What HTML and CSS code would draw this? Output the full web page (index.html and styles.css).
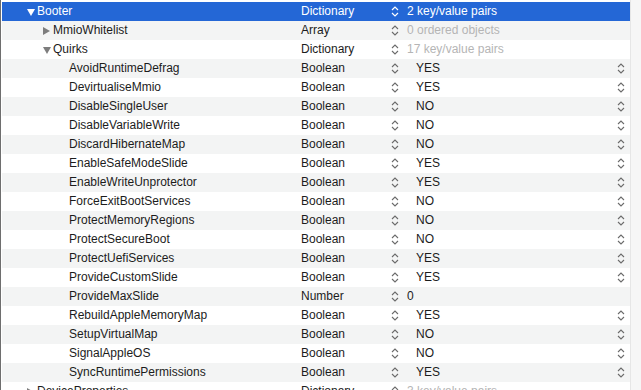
FILE: index.html
```html
<!DOCTYPE html>
<html>
<head>
<meta charset="utf-8">
<link rel="stylesheet" href="styles.css">
</head>
<body>
<div class="frame">
  <div class="outline">
    <div class="row sel">
      <div class="key lvl0"><span class="disc"><svg width="8" height="8" viewBox="0 0 8 8"><path d="M0 1 H8 L4 8 Z" fill="#fff"/></svg></span>Booter</div>
      <div class="type">Dictionary</div>
      <div class="step"><svg width="8" height="11" viewBox="0 0 8 11"><path d="M1 4 L4 1 L7 4 M1 7 L4 10 L7 7" fill="none" stroke="#fff" stroke-width="1.2"/></svg></div>
      <div class="val">2 key/value pairs</div>
    </div>
    <div class="row alt">
      <div class="key lvl1"><span class="disc"><svg width="8" height="8" viewBox="0 0 8 8"><path d="M0 0 L7 4 L0 8 Z" fill="#7d7d7d"/></svg></span>MmioWhitelist</div>
      <div class="type">Array</div>
      <div class="step"><svg width="8" height="11" viewBox="0 0 8 11"><path d="M1 4 L4 1 L7 4 M1 7 L4 10 L7 7" fill="none" stroke="#6b6b6b" stroke-width="1.1"/></svg></div>
      <div class="val dim">0 ordered objects</div>
    </div>
    <div class="row">
      <div class="key lvl1"><span class="disc"><svg width="8" height="8" viewBox="0 0 8 8"><path d="M0 1 H8 L4 8 Z" fill="#7d7d7d"/></svg></span>Quirks</div>
      <div class="type">Dictionary</div>
      <div class="step"><svg width="8" height="11" viewBox="0 0 8 11"><path d="M1 4 L4 1 L7 4 M1 7 L4 10 L7 7" fill="none" stroke="#6b6b6b" stroke-width="1.1"/></svg></div>
      <div class="val dim">17 key/value pairs</div>
    </div>
    <div class="row alt"><div class="key lvl2">AvoidRuntimeDefrag</div><div class="type">Boolean</div><div class="step"><svg width="8" height="11" viewBox="0 0 8 11"><path d="M1 4 L4 1 L7 4 M1 7 L4 10 L7 7" fill="none" stroke="#6b6b6b" stroke-width="1.1"/></svg></div><div class="val bool"><span>YES</span><svg width="8" height="11" viewBox="0 0 8 11"><path d="M1 4 L4 1 L7 4 M1 7 L4 10 L7 7" fill="none" stroke="#6b6b6b" stroke-width="1.1"/></svg></div></div>
    <div class="row"><div class="key lvl2">DevirtualiseMmio</div><div class="type">Boolean</div><div class="step"><svg width="8" height="11" viewBox="0 0 8 11"><path d="M1 4 L4 1 L7 4 M1 7 L4 10 L7 7" fill="none" stroke="#6b6b6b" stroke-width="1.1"/></svg></div><div class="val bool"><span>YES</span><svg width="8" height="11" viewBox="0 0 8 11"><path d="M1 4 L4 1 L7 4 M1 7 L4 10 L7 7" fill="none" stroke="#6b6b6b" stroke-width="1.1"/></svg></div></div>
    <div class="row alt"><div class="key lvl2">DisableSingleUser</div><div class="type">Boolean</div><div class="step"><svg width="8" height="11" viewBox="0 0 8 11"><path d="M1 4 L4 1 L7 4 M1 7 L4 10 L7 7" fill="none" stroke="#6b6b6b" stroke-width="1.1"/></svg></div><div class="val bool"><span>NO</span><svg width="8" height="11" viewBox="0 0 8 11"><path d="M1 4 L4 1 L7 4 M1 7 L4 10 L7 7" fill="none" stroke="#6b6b6b" stroke-width="1.1"/></svg></div></div>
    <div class="row"><div class="key lvl2">DisableVariableWrite</div><div class="type">Boolean</div><div class="step"><svg width="8" height="11" viewBox="0 0 8 11"><path d="M1 4 L4 1 L7 4 M1 7 L4 10 L7 7" fill="none" stroke="#6b6b6b" stroke-width="1.1"/></svg></div><div class="val bool"><span>NO</span><svg width="8" height="11" viewBox="0 0 8 11"><path d="M1 4 L4 1 L7 4 M1 7 L4 10 L7 7" fill="none" stroke="#6b6b6b" stroke-width="1.1"/></svg></div></div>
    <div class="row alt"><div class="key lvl2">DiscardHibernateMap</div><div class="type">Boolean</div><div class="step"><svg width="8" height="11" viewBox="0 0 8 11"><path d="M1 4 L4 1 L7 4 M1 7 L4 10 L7 7" fill="none" stroke="#6b6b6b" stroke-width="1.1"/></svg></div><div class="val bool"><span>NO</span><svg width="8" height="11" viewBox="0 0 8 11"><path d="M1 4 L4 1 L7 4 M1 7 L4 10 L7 7" fill="none" stroke="#6b6b6b" stroke-width="1.1"/></svg></div></div>
    <div class="row"><div class="key lvl2">EnableSafeModeSlide</div><div class="type">Boolean</div><div class="step"><svg width="8" height="11" viewBox="0 0 8 11"><path d="M1 4 L4 1 L7 4 M1 7 L4 10 L7 7" fill="none" stroke="#6b6b6b" stroke-width="1.1"/></svg></div><div class="val bool"><span>YES</span><svg width="8" height="11" viewBox="0 0 8 11"><path d="M1 4 L4 1 L7 4 M1 7 L4 10 L7 7" fill="none" stroke="#6b6b6b" stroke-width="1.1"/></svg></div></div>
    <div class="row alt"><div class="key lvl2">EnableWriteUnprotector</div><div class="type">Boolean</div><div class="step"><svg width="8" height="11" viewBox="0 0 8 11"><path d="M1 4 L4 1 L7 4 M1 7 L4 10 L7 7" fill="none" stroke="#6b6b6b" stroke-width="1.1"/></svg></div><div class="val bool"><span>YES</span><svg width="8" height="11" viewBox="0 0 8 11"><path d="M1 4 L4 1 L7 4 M1 7 L4 10 L7 7" fill="none" stroke="#6b6b6b" stroke-width="1.1"/></svg></div></div>
    <div class="row"><div class="key lvl2">ForceExitBootServices</div><div class="type">Boolean</div><div class="step"><svg width="8" height="11" viewBox="0 0 8 11"><path d="M1 4 L4 1 L7 4 M1 7 L4 10 L7 7" fill="none" stroke="#6b6b6b" stroke-width="1.1"/></svg></div><div class="val bool"><span>NO</span><svg width="8" height="11" viewBox="0 0 8 11"><path d="M1 4 L4 1 L7 4 M1 7 L4 10 L7 7" fill="none" stroke="#6b6b6b" stroke-width="1.1"/></svg></div></div>
    <div class="row alt"><div class="key lvl2">ProtectMemoryRegions</div><div class="type">Boolean</div><div class="step"><svg width="8" height="11" viewBox="0 0 8 11"><path d="M1 4 L4 1 L7 4 M1 7 L4 10 L7 7" fill="none" stroke="#6b6b6b" stroke-width="1.1"/></svg></div><div class="val bool"><span>NO</span><svg width="8" height="11" viewBox="0 0 8 11"><path d="M1 4 L4 1 L7 4 M1 7 L4 10 L7 7" fill="none" stroke="#6b6b6b" stroke-width="1.1"/></svg></div></div>
    <div class="row"><div class="key lvl2">ProtectSecureBoot</div><div class="type">Boolean</div><div class="step"><svg width="8" height="11" viewBox="0 0 8 11"><path d="M1 4 L4 1 L7 4 M1 7 L4 10 L7 7" fill="none" stroke="#6b6b6b" stroke-width="1.1"/></svg></div><div class="val bool"><span>NO</span><svg width="8" height="11" viewBox="0 0 8 11"><path d="M1 4 L4 1 L7 4 M1 7 L4 10 L7 7" fill="none" stroke="#6b6b6b" stroke-width="1.1"/></svg></div></div>
    <div class="row alt"><div class="key lvl2">ProtectUefiServices</div><div class="type">Boolean</div><div class="step"><svg width="8" height="11" viewBox="0 0 8 11"><path d="M1 4 L4 1 L7 4 M1 7 L4 10 L7 7" fill="none" stroke="#6b6b6b" stroke-width="1.1"/></svg></div><div class="val bool"><span>YES</span><svg width="8" height="11" viewBox="0 0 8 11"><path d="M1 4 L4 1 L7 4 M1 7 L4 10 L7 7" fill="none" stroke="#6b6b6b" stroke-width="1.1"/></svg></div></div>
    <div class="row"><div class="key lvl2">ProvideCustomSlide</div><div class="type">Boolean</div><div class="step"><svg width="8" height="11" viewBox="0 0 8 11"><path d="M1 4 L4 1 L7 4 M1 7 L4 10 L7 7" fill="none" stroke="#6b6b6b" stroke-width="1.1"/></svg></div><div class="val bool"><span>YES</span><svg width="8" height="11" viewBox="0 0 8 11"><path d="M1 4 L4 1 L7 4 M1 7 L4 10 L7 7" fill="none" stroke="#6b6b6b" stroke-width="1.1"/></svg></div></div>
    <div class="row alt"><div class="key lvl2">ProvideMaxSlide</div><div class="type">Number</div><div class="step"><svg width="8" height="11" viewBox="0 0 8 11"><path d="M1 4 L4 1 L7 4 M1 7 L4 10 L7 7" fill="none" stroke="#6b6b6b" stroke-width="1.1"/></svg></div><div class="val">0</div></div>
    <div class="row"><div class="key lvl2">RebuildAppleMemoryMap</div><div class="type">Boolean</div><div class="step"><svg width="8" height="11" viewBox="0 0 8 11"><path d="M1 4 L4 1 L7 4 M1 7 L4 10 L7 7" fill="none" stroke="#6b6b6b" stroke-width="1.1"/></svg></div><div class="val bool"><span>YES</span><svg width="8" height="11" viewBox="0 0 8 11"><path d="M1 4 L4 1 L7 4 M1 7 L4 10 L7 7" fill="none" stroke="#6b6b6b" stroke-width="1.1"/></svg></div></div>
    <div class="row alt"><div class="key lvl2">SetupVirtualMap</div><div class="type">Boolean</div><div class="step"><svg width="8" height="11" viewBox="0 0 8 11"><path d="M1 4 L4 1 L7 4 M1 7 L4 10 L7 7" fill="none" stroke="#6b6b6b" stroke-width="1.1"/></svg></div><div class="val bool"><span>NO</span><svg width="8" height="11" viewBox="0 0 8 11"><path d="M1 4 L4 1 L7 4 M1 7 L4 10 L7 7" fill="none" stroke="#6b6b6b" stroke-width="1.1"/></svg></div></div>
    <div class="row"><div class="key lvl2">SignalAppleOS</div><div class="type">Boolean</div><div class="step"><svg width="8" height="11" viewBox="0 0 8 11"><path d="M1 4 L4 1 L7 4 M1 7 L4 10 L7 7" fill="none" stroke="#6b6b6b" stroke-width="1.1"/></svg></div><div class="val bool"><span>NO</span><svg width="8" height="11" viewBox="0 0 8 11"><path d="M1 4 L4 1 L7 4 M1 7 L4 10 L7 7" fill="none" stroke="#6b6b6b" stroke-width="1.1"/></svg></div></div>
    <div class="row alt"><div class="key lvl2">SyncRuntimePermissions</div><div class="type">Boolean</div><div class="step"><svg width="8" height="11" viewBox="0 0 8 11"><path d="M1 4 L4 1 L7 4 M1 7 L4 10 L7 7" fill="none" stroke="#6b6b6b" stroke-width="1.1"/></svg></div><div class="val bool"><span>YES</span><svg width="8" height="11" viewBox="0 0 8 11"><path d="M1 4 L4 1 L7 4 M1 7 L4 10 L7 7" fill="none" stroke="#6b6b6b" stroke-width="1.1"/></svg></div></div>
    <div class="row">
      <div class="key lvl0"><span class="disc"><svg width="8" height="8" viewBox="0 0 8 8"><path d="M0 0 L7 4 L0 8 Z" fill="#7d7d7d"/></svg></span>DeviceProperties</div>
      <div class="type">Dictionary</div>
      <div class="step"><svg width="8" height="11" viewBox="0 0 8 11"><path d="M1 4 L4 1 L7 4 M1 7 L4 10 L7 7" fill="none" stroke="#6b6b6b" stroke-width="1.1"/></svg></div>
      <div class="val dim">3 key/value pairs</div>
    </div>
  </div>
  <div class="gutter"></div>
</div>
</body>
</html>
```

FILE: styles.css
```css
html, body {
  margin: 0;
  padding: 0;
  background: #ffffff;
  overflow: hidden;
}
body {
  width: 641px;
  height: 390px;
  font-family: "Liberation Sans", Arial, Helvetica, sans-serif;
  font-size: 12px;
  color: #1c1c1c;
}
.frame {
  display: flex;
  height: 390px;
  border-left: 1px solid #6e6e6e;
  box-sizing: border-box;
}
.outline {
  width: 629px;
  padding: 2px 0 0 1px;
  box-sizing: border-box;
  background: #ffffff;
}
.gutter {
  flex: 1;
  background: #f6f6f6;
  border-left: 1px solid #e6e6e6;
}
.row {
  display: flex;
  align-items: center;
  height: 19px;
  line-height: 19px;
  white-space: nowrap;
  background: #ffffff;
}
.row.alt {
  background: #f3f4f4;
}
.row.sel {
  background: #2467d6;
  color: #ffffff;
}
.key {
  width: 299px;
  display: flex;
  align-items: center;
  box-sizing: border-box;
}
.lvl0 { padding-left: 25px; }
.lvl1 { padding-left: 41px; }
.lvl2 { padding-left: 67px; }
.disc {
  width: 10px;
  display: flex;
  align-items: center;
}
.disc svg { display: block; }
.type {
  width: 87px;
}
.step {
  width: 19px;
  display: flex;
  align-items: center;
  padding-left: 3px;
  box-sizing: border-box;
}
.step svg, .val svg { display: block; }
.val {
  flex: 1;
}
.val.dim {
  color: #b5b5b5;
}
.val.bool {
  display: flex;
  align-items: center;
  justify-content: space-between;
  padding-left: 9px;
  padding-right: 5px;
}
```
